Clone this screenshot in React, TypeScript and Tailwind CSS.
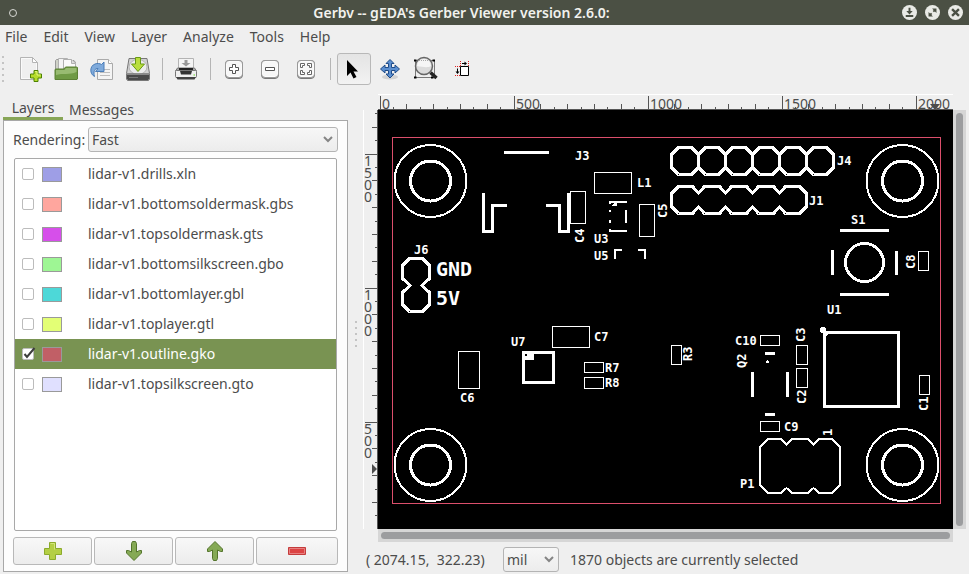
import { useState } from "react";
import type { ReactNode } from "react";

type Layer = { name: string; color: string };

const LAYERS: Layer[] = [
  { name: "lidar-v1.drills.xln", color: "bg-[#9e9ee6]" },
  { name: "lidar-v1.bottomsoldermask.gbs", color: "bg-[#ffa69e]" },
  { name: "lidar-v1.topsoldermask.gts", color: "bg-[#d64fea]" },
  { name: "lidar-v1.bottomsilkscreen.gbo", color: "bg-[#9ef694]" },
  { name: "lidar-v1.bottomlayer.gbl", color: "bg-[#4dd8d8]" },
  { name: "lidar-v1.toplayer.gtl", color: "bg-[#e3ff75]" },
  { name: "lidar-v1.outline.gko", color: "bg-[#c15f66]" },
  { name: "lidar-v1.topsilkscreen.gto", color: "bg-[#e0e0ff]" },
];

const MENUS = ["File", "Edit", "View", "Layer", "Analyze", "Tools", "Help"];

/* ---------- title bar ---------- */

function WindowButton({ label, children }: { label: string; children: ReactNode }) {
  return (
    <button aria-label={label} className="size-[15px]">
      <svg viewBox="0 0 14 14" className="size-full">
        <circle cx="7" cy="7" r="7" fill="#e9eae6" />
        {children}
      </svg>
    </button>
  );
}

function TitleBar() {
  return (
    <header className="grid h-[25px] shrink-0 grid-cols-[1fr_auto_1fr] items-center bg-[#4b5044] pr-[6px] pl-2">
      <button aria-label="Window menu" className="grid size-[10px] place-items-center">
        <span className="size-2 rounded-full border border-[#d8d9d4]" />
      </button>
      <h1 className="pr-12 text-[14px] leading-[22px] font-semibold text-[#f2f2ee]">
        Gerbv -- gEDA's Gerber Viewer version 2.6.0:
      </h1>
      <div className="flex justify-end gap-2">
        <WindowButton label="Minimize">
          <path d="M7 2.5v4M3.5 10.3h7" stroke="#4b5044" strokeWidth="1.8" />
          <path d="M4 5.5h6L7 8.8z" fill="#4b5044" />
        </WindowButton>
        <WindowButton label="Maximize">
          <path d="M6.6 3.3h4.1v4.1zM3.3 6.6v4.1h4.1z" fill="#4b5044" />
          <path d="M9.5 4.5L7.8 6.2M6.2 7.8L4.5 9.5" stroke="#4b5044" strokeWidth="1.6" />
        </WindowButton>
        <WindowButton label="Close">
          <path d="M3.8 3.8l6.4 6.4M10.2 3.8l-6.4 6.4" stroke="#4b5044" strokeWidth="2.2" />
        </WindowButton>
      </div>
    </header>
  );
}

/* ---------- toolbar ---------- */

function ToolIcon({ children }: { children: ReactNode }) {
  return (
    <svg viewBox="0 0 24 24" className="size-6 overflow-visible">
      {children}
    </svg>
  );
}

function KeyCap() {
  return (
    <>
      <rect x="3.5" y="3.5" width="17" height="18" rx="3.5" fill="#c4c4c4" stroke="#777" />
      <rect x="4" y="4" width="16" height="15.5" rx="3" fill="#f7f7f7" stroke="#fff" />
      <rect x="3.5" y="3.5" width="17" height="17" rx="3.5" fill="none" stroke="#999" />
    </>
  );
}

const NewIcon = (
  <ToolIcon>
    <path d="M2.5 .5h12l5 5v17h-17z" fill="#efefef" stroke="#b4b4b4" />
    <path d="M3.5 1.5h10.5l4.500 4.500v15.500h-15z" fill="none" stroke="#fafafa" />
    <path d="M14.500 .5v5h5z" fill="#fff" stroke="#b4b4b4" />
    <path d="M16 13.500h4v3.500h3.500v4H20v3.500h-4V21h-3.500v-4H16z" fill="#b5dc2b" stroke="#4d8200" />
    <path d="M17 14.500h2v3.500h3.500" fill="none" stroke="#e2f57c" />
  </ToolIcon>
);

const OpenIcon = (
  <ToolIcon>
    <path d="M1.500 20V3.500l1-1h6l1 1H20l1.500 2V20z" fill="#cfd2c8" stroke="#999" />
    <path d="M4.500 14V1.500h9l4 4V14z" fill="#f4f4f4" stroke="#b0b0b0" />
    <path d="M9.500 14V2.500h8l4 4V14z" fill="#fafafa" stroke="#b0b0b0" />
    <path d="M17.500 2.500v4h4" fill="#ddd" stroke="#b0b0b0" />
    <path d="M1 22.500V12.500l1-.5h8l1.500-2h11l1 .5v11.500l-.5 .5z" fill="#6f9a45" stroke="#5b8034" />
    <path d="M2 13h8.500l1.500-2h10.500v4c-7 3-14 1-20.500 3z" fill="#98bb72" />
  </ToolIcon>
);

const RevertIcon = (
  <ToolIcon>
    <path d="M7.500 2.500h11l4 4v16h-15z" fill="#f4f4f4" stroke="#aaa" />
    <path d="M18.500 2.500v4h4" fill="#fff" stroke="#aaa" />
    <path d="M10 12.500h10M10 15.500h10M10 18.500h10" stroke="#bdbdbd" />
    <path
      d="M4.500 19.500C-.5 17 -.5 9 5 7c2.500-1 5-.5 6.500 .5l2.500-2.500v9.500H5.500l2.500-3c-3-.5-5 3-3.500 8z"
      fill="#7faadb"
      stroke="#4a7db8"
    />
  </ToolIcon>
);

const SaveIcon = (
  <ToolIcon>
    <path d="M3 1.500h18l2.500 15v5.500l-1 1.500h-21l-1-1.500v-5.500z" fill="#d2d2d2" stroke="#777" />
    <ellipse cx="12" cy="10" rx="9" ry="7.500" fill="#ececec" stroke="#b4b4b4" />
    <path d="M1 16.500h22v5.500l-1 1H2l-1-1z" fill="#4a4a4a" />
    <path d="M1 16.500h22v1.500H1z" fill="#888" />
    <path d="M9.500 .5h5v6.500h4L12 14.500 5.500 7h4z" fill="#b9de3e" stroke="#6a9a16" />
    <path d="M3 20.500h9" stroke="#777" />
  </ToolIcon>
);

const PrintIcon = (
  <ToolIcon>
    <path d="M4.500 13V1.500h15V13z" fill="#f4f4f4" stroke="#b4b4b4" />
    <path d="M10.500 3h3v3h3L12 9.500 7.500 6h3z" fill="#999" />
    <path d="M3.500 11h17l2 3h-21z" fill="#aaa" stroke="#777" />
    <path d="M5 11h14v2.500H5z" fill="#222" />
    <rect x="1.500" y="13.500" width="21" height="7" rx="1" fill="#f0f0f0" stroke="#777" />
    <path d="M6 14h12l-1 3.500H7z" fill="#333" />
    <path d="M2 20h20l-1.500 2.500h-17z" fill="#444" />
    <path d="M19.500 18h1.500" stroke="#6d2" />
  </ToolIcon>
);

const ZoomInIcon = (
  <ToolIcon>
    <KeyCap />
    <path d="M10.500 7.500h3v3h3v3h-3v3h-3v-3h-3v-3h3z" fill="#fff" stroke="#555" />
  </ToolIcon>
);

const ZoomOutIcon = (
  <ToolIcon>
    <KeyCap />
    <path d="M7.500 10.500h9v3h-9z" fill="#fff" stroke="#555" />
  </ToolIcon>
);

const ZoomFitIcon = (
  <ToolIcon>
    <KeyCap />
    <path
      d="M6.500 6.500h4v2h-2v2h-2zM13.500 6.500h4v4h-2v-2h-2zM6.500 13.500h2v2h2v2h-4zM15.500 13.500h2v4h-4v-2h2z"
      fill="#fff"
      stroke="#666"
    />
  </ToolIcon>
);

const PointerIcon = (
  <ToolIcon>
    <path d="M5 3v16l3.500-3.500 3 6 3-1.500-3-5.500h4.500z" fill="#000" />
  </ToolIcon>
);

const PanIcon = (
  <ToolIcon>
    <ellipse cx="12" cy="20" rx="8" ry="2.500" fill="#d2d2d2" />
    <path
      d="M12 2.500l4 4h-2.500V10.500H17V8l4.500 4-4.500 4v-2.500h-3.500V17H16l-4 4-4-4h2.500v-3.500H7V16l-4.500-4L7 8v2.500h3.500V6.500H8z"
      fill="#5b8fd0"
      stroke="#1f4b88"
    />
  </ToolIcon>
);

const ZoomBoxIcon = (
  <ToolIcon>
    <path d="M1.500 3.500h19v17h-19z" fill="none" stroke="#000" strokeDasharray="1 1" />
    <path d="M0 2.500h2.500v2H0zM18.500 2.500h2.500v2h-2.500zM0 19.500h2.500v2H0zM17 19.500h2.500v2H17z" fill="#000" />
    <path d="M16.500 15.500l6 5.500" stroke="#222" strokeWidth="3.500" />
    <circle cx="10" cy="9" r="8.500" fill="#dcdcdc" stroke="#666" strokeWidth="1.500" />
    <path d="M3 9a7 7 0 0 1 14 0c-3 2-8 1-14 0z" fill="#f6f6f6" />
    <path d="M5 3.500h10" stroke="#aaa" strokeDasharray="1 1" />
  </ToolIcon>
);

const MeasureIcon = (
  <ToolIcon>
    <path d="M10.500 9.500h8v9h-8z" fill="#fff" stroke="#000" />
    <path d="M10.500 4v5M18.500 4v5M5 9.500h5M5 18.500h5" stroke="#e02020" strokeDasharray="1 1" />
    <path d="M12 6.500h4M7.500 11.500v4" stroke="#000" />
    <path d="M14.500 4.500v4l2.500-2zM5.500 14.500h4l-2 2.500z" fill="#000" />
  </ToolIcon>
);

function ToolButton({ label, active, children }: { label: string; active?: boolean; children: ReactNode }) {
  return (
    <button
      aria-label={label}
      className={
        active
          ? "mx-px grid h-8 w-[34px] place-items-center rounded-[3px] border border-[#b8b8b8] bg-linear-to-b from-[#e4e4e4] to-[#f2f2f2]"
          : "grid h-8 w-9 place-items-center"
      }
    >
      {children}
    </button>
  );
}

function Separator() {
  return (
    <div className="flex h-[22px] w-3 justify-center">
      <span className="w-px bg-[#b5b5b5]" />
    </div>
  );
}

function Toolbar() {
  return (
    <div className="flex h-[45px] shrink-0 items-start pt-1">
      <div className="flex h-8 w-3 flex-col justify-center gap-1 pl-[2px]">
        {[0, 1, 2, 3, 4].map((i) => (
          <span key={i} className="size-[2px] bg-[#c4c4c4]" />
        ))}
      </div>
      <div className="flex items-center">
        <ToolButton label="New">{NewIcon}</ToolButton>
        <ToolButton label="Open">{OpenIcon}</ToolButton>
        <ToolButton label="Reload">{RevertIcon}</ToolButton>
        <ToolButton label="Save">{SaveIcon}</ToolButton>
        <Separator />
        <ToolButton label="Print">{PrintIcon}</ToolButton>
        <Separator />
        <ToolButton label="Zoom in">{ZoomInIcon}</ToolButton>
        <ToolButton label="Zoom out">{ZoomOutIcon}</ToolButton>
        <ToolButton label="Zoom to fit">{ZoomFitIcon}</ToolButton>
        <Separator />
        <ToolButton label="Pointer" active>
          {PointerIcon}
        </ToolButton>
        <ToolButton label="Pan">{PanIcon}</ToolButton>
        <ToolButton label="Zoom area">{ZoomBoxIcon}</ToolButton>
        <ToolButton label="Measure">{MeasureIcon}</ToolButton>
      </div>
    </div>
  );
}

/* ---------- sidebar ---------- */

function Dropdown({ id, label, options, className }: { id: string; label?: string; options: string[]; className: string }) {
  return (
    <div className={`grid items-center ${className}`}>
      <select
        id={id}
        aria-label={label}
        className="col-start-1 row-start-1 h-[25px] w-full appearance-none rounded-[3px] border border-[#b4b4b4] bg-linear-to-b from-[#f7f7f7] to-[#ececec] pl-[3px] text-[14px] leading-5 text-[#4c4c4c]"
      >
        {options.map((o) => (
          <option key={o}>{o}</option>
        ))}
      </select>
      <svg viewBox="0 0 10 7" className="pointer-events-none col-start-1 row-start-1 mr-[5px] h-[7px] w-[10px] justify-self-end">
        <path d="M1 1l4 4 4-4" fill="none" stroke="#858585" strokeWidth="2" />
      </svg>
    </div>
  );
}

function LayerRow({ layer, selected }: { layer: Layer; selected: boolean }) {
  const [visible, setVisible] = useState(selected);
  return (
    <li className={selected ? "bg-[#799352] text-white" : ""}>
      <label className="flex h-[30px] items-center pl-[7px]">
        <span className="grid size-3">
          <input
            type="checkbox"
            checked={visible}
            onChange={(e) => setVisible(e.target.checked)}
            className="peer col-start-1 row-start-1 size-3 appearance-none rounded-[2px] border border-[#bcbcbc] bg-white"
          />
          <svg viewBox="0 0 12 12" className="invisible col-start-1 row-start-1 size-3 overflow-visible peer-checked:visible">
            <path d="M2.500 6l2.500 3L12.500 0" fill="none" stroke="#3d3d3d" strokeWidth="2" />
          </svg>
        </span>
        <span className={`ml-2 h-[15px] w-5 border border-[#9a9a9a] ${layer.color}`} />
        <span className="ml-[26px] leading-5">{layer.name}</span>
      </label>
    </li>
  );
}

function PanelButton({ label, children }: { label: string; children: ReactNode }) {
  return (
    <button
      aria-label={label}
      className="grid h-7 place-items-center rounded-[3px] border border-[#b8b8b8] bg-linear-to-b from-[#f8f8f8] to-[#ececec]"
    >
      <svg viewBox="0 0 20 20" className="size-5">
        {children}
      </svg>
    </button>
  );
}

function Sidebar() {
  return (
    <aside className="flex w-[345px] shrink-0 flex-col pb-[2px]">
      <div role="tablist" className="flex h-[26px]">
        <button role="tab" aria-selected="true" className="h-[26px] w-[60px] border-b-3 border-[#87a556] pt-1 text-center leading-5">
          Layers
        </button>
        <button role="tab" aria-selected="false" className="h-[26px] px-[6px] pt-[5px] leading-5">
          Messages
        </button>
      </div>
      <div className="flex min-h-0 flex-1 flex-col gap-[6px] border border-[#a8a8a8] bg-[#fdfdfd] px-[9px] pt-[6px] pb-[6px]">
        <div className="flex items-center">
          <label htmlFor="rendering" className="w-[75px] leading-5">
            Rendering:
          </label>
          <Dropdown id="rendering" options={["Fast", "Normal", "High quality"]} className="flex-1" />
        </div>
        <ul className="mx-px min-h-0 flex-1 overflow-hidden rounded-[2px] border border-[#a8a8a8] bg-white">
          {LAYERS.map((layer) => (
            <LayerRow key={layer.name} layer={layer} selected={layer.name === "lidar-v1.outline.gko"} />
          ))}
        </ul>
        <div className="grid grid-cols-[1fr_1fr_1fr_82px] gap-[2px]">
          <PanelButton label="Add layer">
            <path d="M6.500 1.500h6v6h6v6h-6v5h-6v-5h-5v-6h5z" fill="#b4cf45" stroke="#8cab2c" />
            <path d="M7.500 2.500h4v6" fill="none" stroke="#d3e67d" />
          </PanelButton>
          <PanelButton label="Move layer down">
            <path d="M7.500 2.500l1-2h3l1 2v8.500l3-1.500h2V12l-7.500 7.500L2.500 12V9.500h2l3 1.500z" fill="#85a955" stroke="#54752c" />
          </PanelButton>
          <PanelButton label="Move layer up">
            <path d="M7.500 17.500l1 2h3l1-2V9l3 1.500h2V8L10 .5 2.500 8v2.500h2l3-1.500z" fill="#85a955" stroke="#54752c" />
          </PanelButton>
          <PanelButton label="Remove layer">
            <path d="M1.500 6.500h17v7h-17z" fill="#dc4444" stroke="#c43c3c" />
            <path d="M2.500 7.500h15v5h-15z" fill="none" stroke="#e88080" />
          </PanelButton>
        </div>
      </div>
    </aside>
  );
}

/* ---------- rulers ---------- */

const MINOR = 13.4;

function HorizontalRuler() {
  return (
    <svg className="h-4 w-full overflow-visible border-t border-white">
      {Array.from({ length: 42 }, (_, i) => {
        const x = Math.floor(2 + i * MINOR) + 0.5;
        const length = i % 10 === 0 ? 14 : i % 2 === 0 ? 6 : 3;
        return <path key={i} d={`M${x} 15v-${length}`} stroke="#555" />;
      })}
      {[0, 1, 2, 3, 4].map((i) => (
        <text key={i} x={4 + i * 134} y="14" fontSize="14" fill="#4c4c4c">
          {i * 500}
        </text>
      ))}
      <path d="M552 9h10l-5 6z" fill="#4c4c4c" />
      <line x1="0" x2="100%" y1="14.5" y2="14.5" stroke="#555" />
    </svg>
  );
}

function VerticalRuler() {
  const marks = [
    { digits: "1500", y: 44 },
    { digits: "1000", y: 178 },
    { digits: "500", y: 312 },
  ];
  return (
    <svg className="h-full w-[15px] overflow-visible border-l border-white">
      {Array.from({ length: 31 }, (_, i) => {
        const step = i - 3;
        const y = Math.floor(44 + step * MINOR) + 0.5;
        const length = step % 10 === 0 ? 13 : step % 2 === 0 ? 6 : 3;
        return <path key={i} d={`M14 ${y}h-${length}`} stroke="#555" />;
      })}
      {marks.map((m) =>
        m.digits.split("").map((d, k) => (
          <text key={m.digits + k} x="0" y={m.y + 12 + k * 12} fontSize="14" fill="#4c4c4c">
            {d}
          </text>
        )),
      )}
      <path d="M8 354v10l5-5z" fill="#4c4c4c" />
      <line x1="13.5" x2="13.5" y1="0" y2="100%" stroke="#555" />
    </svg>
  );
}

/* ---------- board drawing ---------- */

const HOLES = [
  [430, 181],
  [902, 181],
  [430, 465],
  [902, 465],
];

// x, y, width, height of the small component outlines
const PARTS = [
  [570.5, 191.5, 15, 32],
  [594.5, 172.5, 37, 21],
  [639.5, 204.5, 15, 32],
  [918.5, 251.5, 10, 19],
  [796.5, 345.5, 11, 19],
  [796.5, 368.5, 11, 19],
  [919.5, 375.5, 10, 19],
  [671.5, 345.5, 10, 19],
  [760.5, 335.5, 19, 10],
  [760.5, 421.5, 19, 10],
  [552.5, 326.5, 37, 21],
  [584.5, 362.5, 19, 10],
  [584.5, 377.5, 19, 11],
  [458.5, 351.5, 21, 37],
];

// text, left edge, baseline
const LABELS: [string, number, number][] = [
  ["J3", 575, 160],
  ["L1", 637, 187],
  ["U3", 594, 243],
  ["U5", 594, 260],
  ["J4", 837, 165],
  ["J1", 809, 205],
  ["S1", 851, 224],
  ["U1", 827, 314],
  ["C10", 735, 345],
  ["C9", 784, 431],
  ["P1", 740, 488],
  ["C7", 594, 341],
  ["U7", 511, 346],
  ["R7", 605, 372],
  ["R8", 605, 387],
  ["C6", 460, 402],
  ["J6", 414, 254],
];

// text, baseline x, bottom edge; these read upwards
const SIDE_LABELS: [string, number, number][] = [
  ["C4", 584, 243],
  ["C5", 667, 218],
  ["C8", 915, 269],
  ["C3", 805, 342],
  ["C2", 806, 404],
  ["C1", 928, 411],
  ["R3", 692, 361],
  ["Q2", 746, 368],
  ["1", 832, 436],
];

function Board() {
  return (
    <svg className="size-full bg-black" role="img" aria-label="Board outline and silkscreen">
      <g transform="translate(-378 -110)" fill="none" stroke="#fff" shapeRendering="crispEdges">
        <rect x="392.5" y="137.5" width="548" height="366" stroke="#dc4f6c" />
        {HOLES.map(([x, y]) => (
          <g key={`${x}-${y}`}>
            <circle cx={x + 0.5} cy={y} r="36" strokeWidth="2" />
            <circle cx={x + 0.5} cy={y} r="20" strokeWidth="3" />
          </g>
        ))}
        {PARTS.map(([x, y, w, h]) => (
          <rect key={`${x}-${y}`} x={x} y={y} width={w} height={h} />
        ))}

        <g strokeWidth="3">
          {/* J3 connector */}
          <path d="M504 152.500h45M483.500 193v38.500h9v-26H507M546 205.500h13.500v26h9V193" />
          {/* J4 header */}
          {[0, 1, 2, 3, 4, 5].map((i) => (
            <path
              key={i}
              transform={`translate(${671.5 + i * 27} 147.500)`}
              d="M7 0h13l7 7v13l-7 7h-13l-7-7v-13z"
            />
          ))}
          {/* J1 header */}
          <path d="M678.500 186.500h14l6 6.500 6-6.500h15l6 6.500 6-6.500h15l6 6.500 6-6.500h15l6 6.500 6-6.500h14l7 7v13l-7 7h-14l-6-6.500-6 6.500h-15l-6-6.500-6 6.500h-15l-6-6.500-6 6.500h-15l-6-6.500-6 6.500h-14l-7-7v-13z" />
          {/* J6 header */}
          <path d="M409.500 258.500h13l7 7v13l-7.500 7 7.500 7v12l-7 7h-13l-7-7v-12l7.500-7-7.500-7v-13z" />
          {/* S1 button */}
          <path d="M840 230.500h49M840 294.500h49M832.500 250v25M896.500 251v24" />
          <circle cx="864.500" cy="262.500" r="19" />
          {/* U1 */}
          <path d="M824.500 332.500h74v74h-74zM824.500 336l4-4" />
          {/* U7 */}
          <path d="M523.500 352.500h30v30h-30z" />
          {/* Q2 */}
          <path d="M765 353.500h10M765 414.500h10M752.500 372v25M787.500 372v25" />
        </g>

        <g strokeWidth="2">
          {/* U3 and U5 */}
          <path d="M609 202h18M609 231h18M626 210v13M610 201v3M610 210v2M610 220v3M610 229v3M626 201v2" />
          <path d="M615 259v-9h7M638 250h7v9" />
          {/* P1 */}
          <path d="M768 439h13l5.500 6 5.500-6h16l5.500 6 5.500-6h13l8 8v38l-8 8h-13l-5.500-5-5.500 5h-16l-5.500-5-5.500 5h-13l-8-8v-38z" />
        </g>

        <g fill="#fff" stroke="none">
          <circle cx="823" cy="330" r="3" />
          <path d="M612 206l2-3h3v3zM766 361h1v-1h1v1h1v2h-3zM525 360v-4h2v-2h7v6z" />
        </g>

        <g
          fill="#fff"
          stroke="none"
          fontFamily="'DejaVu Sans Mono', monospace"
          fontWeight="bold"
          fontSize="12"
        >
          {LABELS.map(([text, x, y]) => (
            <text key={text} x={x} y={y}>
              {text}
            </text>
          ))}
          {SIDE_LABELS.map(([text, x, y]) => (
            <text key={text} transform={`translate(${x} ${y}) rotate(-90)`}>
              {text}
            </text>
          ))}
          <g fontSize="20">
            <text x="436" y="276">
              GND
            </text>
            <text x="436" y="305">
              5V
            </text>
          </g>
        </g>
      </g>
    </svg>
  );
}

function Viewer() {
  return (
    <main className="flex min-w-0 flex-1 flex-col pr-[3px]">
      <div className="grid min-h-0 flex-1 grid-cols-[15px_minmax(0,1fr)_13px] grid-rows-[16px_minmax(0,1fr)_13px]">
        <div />
        <HorizontalRuler />
        <div />
        <VerticalRuler />
        <Board />
        <div className="flex bg-[#d6d6d6] p-[3px]">
          <div className="flex-1 rounded-full bg-[#9c9d9f]" />
        </div>
        <div />
        <div className="flex bg-[#d6d6d6] p-[3px]">
          <div className="flex-1 rounded-full bg-[#9c9d9f]" />
        </div>
      </div>
      <footer className="flex h-8 shrink-0 items-center pt-[3px] pl-[3px]">
        <output className="w-[137px] leading-5 whitespace-pre">( 2074.15,  322.23)</output>
        <Dropdown id="units" label="Units" options={["mil", "mm", "in"]} className="w-[56px]" />
        <p className="pl-[11px] leading-5">1870 objects are currently selected</p>
      </footer>
    </main>
  );
}

export default function App() {
  return (
    <div className="flex h-screen flex-col overflow-hidden bg-[#efefef] font-['Noto_Sans',sans-serif] text-[14px] text-[#4c4c4c]">
      <TitleBar />
      <nav className="flex h-6 shrink-0 items-center gap-4 pl-[5px]">
        {MENUS.map((m) => (
          <button key={m} className="leading-5">
            {m}
          </button>
        ))}
      </nav>
      <Toolbar />
      <div className="flex min-h-0 flex-1 pl-[3px]">
        <Sidebar />
        <div className="flex w-[15px] shrink-0 flex-col items-center justify-center gap-1">
          {[0, 1, 2, 3, 4].map((i) => (
            <span key={i} className="size-[2px] bg-[#c4c4c4]" />
          ))}
        </div>
        <Viewer />
      </div>
    </div>
  );
}
